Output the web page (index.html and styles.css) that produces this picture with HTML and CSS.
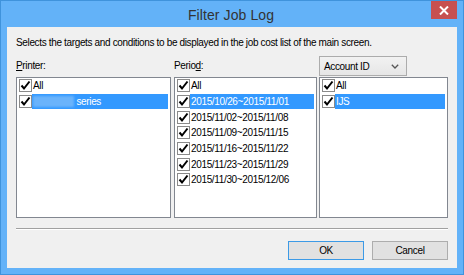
FILE: index.html
```html
<!DOCTYPE html>
<html lang="en">
<head>
    <meta charset="UTF-8">
    <title>Filter Job Log</title>
    <link rel="stylesheet" href="styles.css">
</head>
<body>
    <div class="window">
        <div class="titlebar">
            <span></span>
            <h1 class="title">Filter Job Log</h1>
            <button class="close-btn" aria-label="Close">
                <svg width="10" height="9" viewBox="0 0 10 9"><path d="M1 0.5 L9 8.5 M9 0.5 L1 8.5" stroke="#fff" stroke-width="2"/></svg>
            </button>
        </div>

        <div class="client">
            <p class="intro">Selects the targets and conditions to be displayed in the job cost list of the main screen.</p>

            <div class="columns">
                <div class="col col-printer">
                    <div class="col-head"><label><u>P</u>rinter:</label></div>
                    <ul class="checklist">
                        <li><span class="check"></span><span class="item">All</span></li>
                        <li class="selected"><span class="check"></span><span class="item"><span class="blurred"></span> series</span></li>
                    </ul>
                </div>

                <div class="col col-period">
                    <div class="col-head"><label>Perio<u>d</u>:</label></div>
                    <ul class="checklist">
                        <li><span class="check"></span><span class="item">All</span></li>
                        <li class="selected"><span class="check"></span><span class="item">2015/10/26~2015/11/01</span></li>
                        <li><span class="check"></span><span class="item">2015/11/02~2015/11/08</span></li>
                        <li><span class="check"></span><span class="item">2015/11/09~2015/11/15</span></li>
                        <li><span class="check"></span><span class="item">2015/11/16~2015/11/22</span></li>
                        <li><span class="check"></span><span class="item">2015/11/23~2015/11/29</span></li>
                        <li><span class="check"></span><span class="item">2015/11/30~2015/12/06</span></li>
                    </ul>
                </div>

                <div class="col col-account">
                    <div class="col-head">
                        <div class="combo">
                            <span>Account ID</span>
                            <svg width="8" height="5" viewBox="0 0 8 5"><path d="M0.8 0.8 L4 4 L7.2 0.8" fill="none" stroke="#555" stroke-width="1.3"/></svg>
                        </div>
                    </div>
                    <ul class="checklist">
                        <li><span class="check"></span><span class="item">All</span></li>
                        <li class="selected"><span class="check"></span><span class="item">IJS</span></li>
                    </ul>
                </div>
            </div>

            <hr class="separator">

            <div class="actions">
                <button class="btn btn-default">OK</button>
                <button class="btn">Cancel</button>
            </div>
        </div>
    </div>
</body>
</html>
```

FILE: styles.css
```css
* {
    margin: 0;
    padding: 0;
    box-sizing: border-box;
}

body {
    font-family: 'Liberation Sans', Arial, sans-serif;
    font-size: 10px;
    letter-spacing: -0.35px;
    color: #000;
    background: #fff;
}

.window {
    width: 464px;
    height: 275px;
    background: #63b2f8;
    border: 1px solid #3f93dc;
    padding: 0 6px 6px 6px;
    display: flex;
    flex-direction: column;
}

.titlebar {
    height: 26px;
    display: grid;
    grid-template-columns: 1fr auto 1fr;
    align-items: start;
}

.title {
    font-size: 14px;
    font-weight: normal;
    letter-spacing: 0.1px;
    color: #333;
    line-height: 28px;
    padding-right: 2px;
}

.close-btn {
    justify-self: end;
    width: 26px;
    height: 18px;
    background: #c75050;
    border: none;
    display: flex;
    align-items: center;
    justify-content: center;
}

.client {
    flex: 1;
    background: #f0f0f0;
    padding: 10px 9px 0 9px;
    display: flex;
    flex-direction: column;
}

.intro {
    line-height: 12px;
    height: 19px;
}

.columns {
    display: flex;
    gap: 3px;
    height: 162px;
}

.col {
    display: flex;
    flex-direction: column;
}

.col-printer { width: 155px; }
.col-period { width: 143px; }
.col-account { width: 129px; margin-left: -1px; }

.col-head {
    height: 21px;
    display: flex;
    align-items: center;
}

.col-head label {
    line-height: 12px;
    padding-bottom: 1px;
}

.combo {
    width: 88px;
    height: 20px;
    border: 1px solid #acacac;
    background: linear-gradient(#f2f2f2, #e6e6e6);
    display: flex;
    align-items: center;
    justify-content: space-between;
    padding: 0 7px 0 4px;
    margin-bottom: 1px;
}

.checklist {
    list-style: none;
    flex: 1;
    background: #fff;
    border: 1px solid #828790;
}

.checklist li {
    height: 15.67px;
    display: flex;
    align-items: center;
    padding-left: 2px;
    padding-right: 2px;
}

.check {
    width: 13px;
    height: 13px;
    flex: none;
    background: #fff url("data:image/svg+xml,%3Csvg xmlns='http://www.w3.org/2000/svg' width='13' height='13'%3E%3Crect x='0.5' y='0.5' width='12' height='12' fill='none' stroke='%238a8a8a'/%3E%3Cpath d='M2.5 6.5 L5 9.5 L10.5 2.5' fill='none' stroke='%23000' stroke-width='2'/%3E%3C/svg%3E") no-repeat;
}

.item {
    flex: 1;
    line-height: 15px;
    padding-left: 1px;
    white-space: nowrap;
}

.selected .item {
    background: #3399ff;
    color: #fff;
}

.blurred {
    display: inline-block;
    width: 41px;
    height: 11px;
    vertical-align: -2px;
    background: #6ab3fb;
    filter: blur(1px);
}

.separator {
    border: none;
    border-top: 1px solid #a0a0a0;
    border-bottom: 1px solid #fff;
    margin: 10px 0 0 0;
}

.actions {
    display: flex;
    justify-content: flex-end;
    gap: 8px;
    margin-top: 11px;
}

.btn {
    width: 76px;
    height: 19px;
    font-family: inherit;
    font-size: 10px;
    letter-spacing: -0.35px;
    background: #e1e1e1;
    border: 1px solid #adadad;
    color: #000;
}

.btn-default {
    border-color: #3c9ae6;
}
```
